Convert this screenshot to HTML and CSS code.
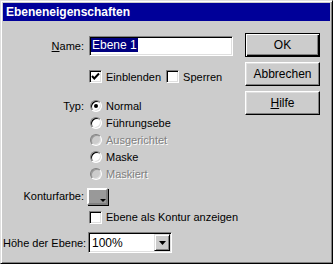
FILE: index.html
```html
<!DOCTYPE html>
<html lang="de">
<head>
    <meta charset="UTF-8">
    <title>Ebeneneigenschaften</title>
    <link rel="stylesheet" href="styles.css">
</head>
<body>
    <div class="dialog">
        <div class="titlebar">Ebeneneigenschaften</div>

        <div class="content">
            <div class="form">
                <span class="label"><u>N</u>ame:</span>
                <div class="textbox"><span class="selection">Ebene 1</span></div>

                <div class="checks ctl">
                    <span class="check">
                        <span class="box">
                            <svg width="9" height="9" viewBox="0 0 9 9"><polyline points="1,4 3.3,6.5 8,1.5" fill="none" stroke="#000" stroke-width="2"/></svg>
                        </span>Einblenden
                    </span>
                    <span class="check"><span class="box"></span>Sperren</span>
                </div>

                <span class="label">Typ:</span>
                <span class="radio"><span class="dot on"></span>Normal</span>
                <span class="radio ctl"><span class="dot"></span>Führungsebe</span>
                <span class="radio ctl disabled"><span class="dot"></span>Ausgerichtet</span>
                <span class="radio ctl"><span class="dot"></span>Maske</span>
                <span class="radio ctl disabled"><span class="dot"></span>Maskiert</span>

                <span class="label">Konturfarbe:</span>
                <span class="swatch"><span class="swatch-arrow"></span></span>

                <span class="check ctl"><span class="box"></span>Ebene als Kontur anzeigen</span>

                <span class="label last">Höhe der Ebene:</span>
                <div class="combo last">
                    <span class="combo-value">100%</span>
                    <span class="combo-button">
                        <svg width="7" height="4" viewBox="0 0 7 4"><polygon points="0,0 7,0 3.5,4" fill="#000"/></svg>
                    </span>
                </div>
            </div>

            <div class="buttons">
                <button class="btn default">OK</button>
                <button class="btn">Abbrechen</button>
                <button class="btn"><u>H</u>ilfe</button>
            </div>
        </div>
    </div>
</body>
</html>
```

FILE: styles.css
```css
* {
    margin: 0;
    padding: 0;
    box-sizing: border-box;
}

body {
    font-family: 'Liberation Sans', Arial, sans-serif;
    font-size: 11px;
    color: #000;
    background: #ccc;
}

.dialog {
    width: 333px;
    height: 264px;
    padding: 2px;
    background: #ccc;
    border: 1px solid;
    border-color: #dfdfdf #000 #000 #dfdfdf;
    box-shadow: inset 1px 1px #fff, inset -1px -1px #808080;
}

.titlebar {
    height: 18px;
    line-height: 18px;
    padding-left: 3px;
    background: #000099;
    color: #fff;
    font-size: 12px;
    font-weight: bold;
}

.content {
    display: flex;
}

/* left part: labels + controls */
.form {
    display: grid;
    grid-template-columns: 81px 150px;
    grid-template-rows: 20px 41px repeat(5, 17px) 28px 14px 29px;
    column-gap: 5px;
    align-items: center;
    padding-top: 15px;
}

.label {
    text-align: right;
    white-space: nowrap;
}

.ctl {
    grid-column: 2;
}

.textbox {
    width: 144px;
    height: 20px;
    padding: 0 1px;
    background: #fff;
    border: 1px solid;
    border-color: #808080 #fff #fff #808080;
    box-shadow: inset 1px 1px #000, inset -1px -1px #dfdfdf;
}

.selection {
    display: inline-block;
    margin-top: 1px;
    padding: 0 1px;
    line-height: 14px;
    background: #000080;
    color: #fff;
    font-size: 12px;
}

.checks {
    display: flex;
    gap: 5px;
}

.check {
    display: flex;
    align-items: center;
    gap: 4px;
    white-space: nowrap;
}

.box {
    display: flex;
    align-items: center;
    justify-content: center;
    width: 13px;
    height: 13px;
    background: #fff;
    border: 1px solid;
    border-color: #808080 #fff #fff #808080;
    box-shadow: inset 1px 1px #000, inset -1px -1px #dfdfdf;
}

.radio {
    display: flex;
    align-items: center;
    gap: 4px;
    padding-left: 1px;
}

.dot {
    position: relative;
    width: 12px;
    height: 12px;
    border-radius: 50%;
    background: #fff;
    border: 1px solid;
    border-color: #808080 #fff #fff #808080;
    box-shadow: inset 1px 1px #000, inset -1px -1px #dfdfdf;
}

.dot.on::after {
    content: "";
    position: absolute;
    left: 3px;
    top: 3px;
    width: 4px;
    height: 4px;
    border-radius: 50%;
    background: #000;
}

.radio.disabled {
    color: #808080;
    text-shadow: 1px 1px #fff;
}

.radio.disabled .dot {
    background: #ccc;
    box-shadow: inset 1px 1px #999, inset -1px -1px #dfdfdf;
}

.swatch {
    position: relative;
    width: 21px;
    height: 17px;
    margin-left: -2px;
    background: #999;
    border: 2px solid;
    border-color: #fff #808080 #808080 #fff;
    box-shadow: 1px 1px #000;
}

.swatch-arrow {
    position: absolute;
    right: 0;
    bottom: 1px;
    border-left: 3px solid transparent;
    border-right: 3px solid transparent;
    border-top: 3px solid #000;
}

.last {
    margin-top: 8px;
}

.combo {
    display: flex;
    align-items: center;
    width: 84px;
    height: 21px;
    margin-left: -1px;
    padding: 2px;
    background: #fff;
    border: 1px solid;
    border-color: #808080 #fff #fff #808080;
    box-shadow: inset 1px 1px #000, inset -1px -1px #dfdfdf;
}

.combo-value {
    flex: 1;
    padding-left: 1px;
    font-size: 12px;
}

.combo-button {
    display: flex;
    align-items: center;
    justify-content: center;
    width: 16px;
    height: 17px;
    margin-right: -1px;
    background: #ccc;
    border: 1px solid;
    border-color: #dfdfdf #000 #000 #dfdfdf;
    box-shadow: inset 1px 1px #fff, inset -1px -1px #808080;
}

/* right part: buttons */
.buttons {
    display: flex;
    flex-direction: column;
    gap: 5px;
    width: 75px;
    margin: 12px 10px 0 auto;
}

.btn {
    height: 24px;
    font-family: inherit;
    font-size: 12px;
    color: #000;
    background: #ccc;
    border: 1px solid;
    border-color: #fff #000 #000 #fff;
    box-shadow: inset -1px -1px #808080, inset 1px 1px #dfdfdf;
}

.btn.default {
    border-color: #000;
    box-shadow: inset 1px 1px #fff, inset -1px -1px #000, inset -2px -2px #808080;
}
```
